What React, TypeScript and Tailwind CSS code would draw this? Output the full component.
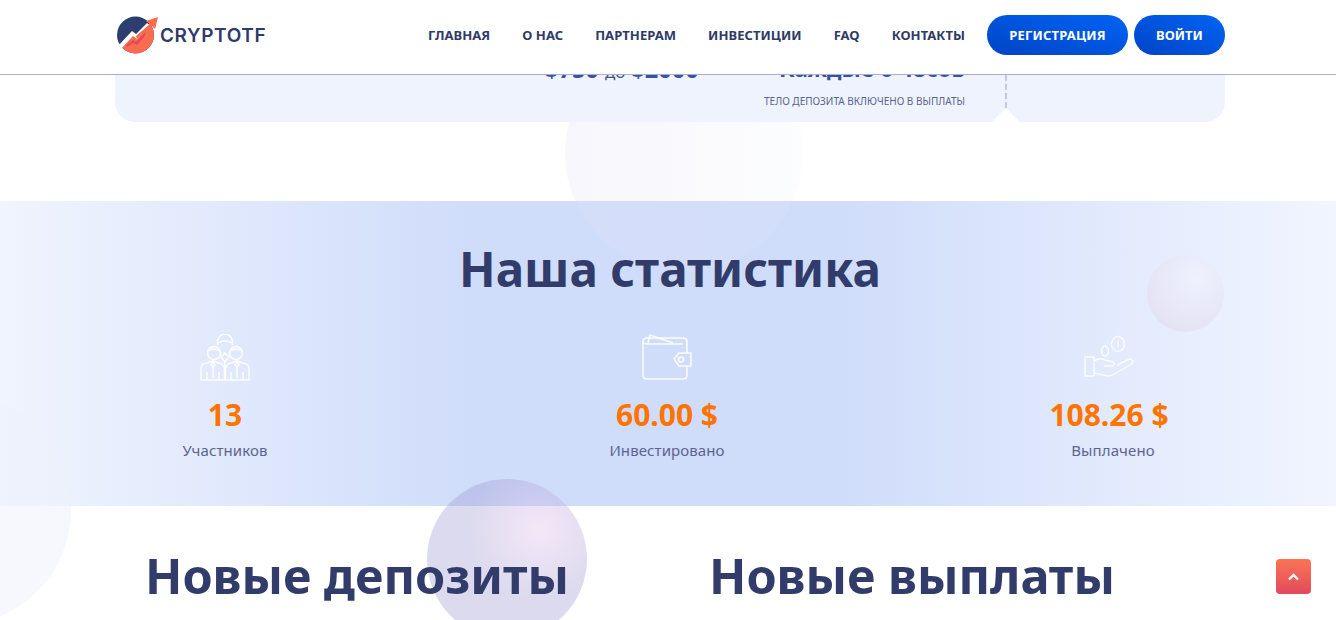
import React from "react";

const navItems = ["Главная", "О нас", "Партнерам", "Инвестиции", "FAQ", "Контакты"];

const Logo = () => (
	<div className="flex items-center gap-[1px]">
		<svg width="42" height="38" viewBox="0 0 42 38" className="block">
			<defs>
				<clipPath id="logoCircle">
					<circle cx="18.500" cy="19" r="18.500" />
				</clipPath>
			</defs>
			<g clipPath="url(#logoCircle)">
				<rect width="42" height="38" fill="#2c3e70" />
				<path d="M0 34 L16 19 L20 21 L34 6 L42 10 V38 H0 Z" fill="#fb6b4f" />
				<path d="M9 29 L16 24 L19 26 L29 15 L27 21 L20 29 L16 27 L10 31 Z" fill="#d9435a" opacity="0.8" />
			</g>
			<path d="M0 31 L15 15 L19 18 L30 7 L34 10 L20 23 L16 20 L3 34 Z" fill="#ffffff" />
			<path d="M29 5 L41 1 L38 13 L35 10 L20 23 L19 20 L33 8 Z" fill="#fb6b4f" />
		</svg>
		<span className="font-['Inter',sans-serif] font-semibold text-[19px] tracking-[0.6px] text-[#2e3b6b] leading-none">
			CRYPTOTF
		</span>
	</div>
);

const PeopleIcon = () => (
	<svg width="50" height="48" viewBox="0 0 50 48" fill="none" stroke="#ffffff" strokeOpacity="0.9" strokeWidth="1.500" strokeLinejoin="round" className="translate-y-[1px]">
		<path d="M18 11 A7.500 8 0 1 1 32 11" />
		<path d="M18 9 Q25 5 32 9" />
		<circle cx="14" cy="19" r="6.500" />
		<circle cx="36" cy="19" r="6.500" />
		<path d="M8 17 Q14 13 20 17 M30 17 Q36 13 42 17" />
		<path d="M1 46 V34 Q1 30 7 29 L13 27 L19 29 Q23 30 24.500 34 V46 Z" />
		<path d="M25.500 46 V34 Q27 30 31 29 L37 27 L43 29 Q49 30 49 34 V46 Z" />
		<path d="M21 23 L25 19 L29 23 L25 28 Z" />
		<path d="M13 28 L11 31 L13 33 L15 31 Z M13 33 V44 M37 28 L35 31 L37 33 L39 31 Z M37 33 V44 M25 28 V35 M7 38 V46 M43 38 V46 M19 38 V46 M31 38 V46" />
	</svg>
);

const WalletIcon = () => (
	<svg width="50" height="46" viewBox="0 0 50 46" fill="none" stroke="#ffffff" strokeOpacity="0.9" strokeWidth="1.600" strokeLinejoin="round">
		<path d="M45 19 V8 Q45 4 41 4 H5 Q1 4 1 8 V41 Q1 45 5 45 H41 Q45 45 45 41 V32" />
		<path d="M1 8 Q1 10 5 10 H41" />
		<path d="M6 9 L8 1 L31 9" />
		<path d="M49 19 H37 L32 25 L37 32 H49 Z" />
		<circle cx="39" cy="25.500" r="2.500" />
	</svg>
);

const HandIcon = () => (
	<svg width="50" height="46" viewBox="0 0 50 46" fill="none" stroke="#ffffff" strokeOpacity="0.9" strokeWidth="1.400" strokeLinejoin="round">
		<path d="M1 23 H10 V42 H1 Z" />
		<path d="M10 27 Q16 23 21 26 L29 28 Q32 30 29 32 H20" />
		<path d="M10 39 L24 42 Q28 42 32 39 L48 30 Q50 26 46 25 L33 31" />
		<ellipse cx="34" cy="10" rx="6.500" ry="7.500" />
		<path d="M34 7 V13" />
		<ellipse cx="21" cy="17" rx="3.500" ry="5" />
	</svg>
);

const StatItem = ({
	icon,
	value,
	label,
	labelClass = "",
}: {
	icon: React.ReactNode;
	value: string;
	label: string;
	labelClass?: string;
}) => (
	<div className="flex flex-col items-center">
		<div className="h-[48px] flex items-center justify-center">{icon}</div>
		<div className="mt-[14px] font-bold text-[30px] leading-[40px] text-[#ff7300]">{value}</div>
		<div className={`mt-[5px] text-[15px] leading-[20px] tracking-[0.1px] text-[#5c6490] ${labelClass}`}>{label}</div>
	</div>
);

const App = () => {
	return (
		<div className="relative w-[1336px] h-[620px] overflow-hidden bg-white font-['Noto_Sans',sans-serif]">
			{/* header stays over the scrolled page */}
			<header className="absolute top-0 left-0 z-30 w-full h-[75px] bg-white border-b border-[#a9afcc] pl-[117px] pr-[111px] pb-[4px] flex items-center justify-between">
				<Logo />
				<div className="flex items-center">
					<nav className="flex items-center gap-[32px] mr-[22px] pt-[2px]">
						{navItems.map((item) => (
							<a key={item} className="uppercase font-bold text-[13px] tracking-[0.05px] text-[#2e3b66] whitespace-nowrap">
								{item}
							</a>
						))}
					</nav>
					<div className="flex gap-[6px]">
						<button className="w-[141px] h-[40px] pt-[2px] rounded-[20px] bg-linear-to-tr from-[#0044c6] to-[#0064f4] text-white uppercase font-bold text-[13px] tracking-[0.2px]">
							Регистрация
						</button>
						<button className="w-[91px] h-[40px] pt-[2px] rounded-[20px] bg-linear-to-tr from-[#0044c6] to-[#0064f4] text-white uppercase font-bold text-[13px]">
							Войти
						</button>
					</div>
				</div>
			</header>

			{/* spheres */}
			<div className="absolute left-[565px] top-[34px] w-[238px] h-[238px] rounded-full bg-[linear-gradient(90deg,rgba(225,225,245,0.28),rgba(235,238,250,0.12))]" />
			<div className="absolute left-[427px] top-[479px] w-[160px] h-[160px] rounded-full bg-[radial-gradient(circle_at_70%_32%,rgba(225,195,235,0.4),rgba(155,149,206,0.35)_45%)]" />
			<div className="absolute left-[-159px] top-[395px] w-[230px] h-[230px] rounded-full bg-[#eef1fb]/50" />
			<div className="absolute left-[1147px] top-[255px] w-[77px] h-[77px] rounded-full bg-[radial-gradient(circle_at_65%_30%,#eff1fe,#e6e6f6_60%,#dfdff0)]" />

			<div className="w-[1110px] ml-[115px] relative z-10">
				<div className="h-[122px] rounded-b-[20px] bg-[#eff3fe] relative overflow-hidden">
					<div className="absolute left-[430px] top-[56px] whitespace-nowrap text-[#3a50a6] font-bold text-[23.500px] leading-[26px]">
						$750 <span className="font-normal text-[17px] text-[#4c5580]">до</span> $2000
					</div>
					<div className="absolute right-[260px] top-[56px] whitespace-nowrap text-[#3a50a6] font-bold text-[22.600px] leading-[26px]">
						Каждые 6-48сов
					</div>
					<div className="absolute right-[260px] top-[95px] whitespace-nowrap text-[10px] leading-[12px] text-[#5c6490]">
						ТЕЛО ДЕПОЗИТА ВКЛЮЧЕНО В ВЫПЛАТЫ
					</div>
					<div className="absolute left-[890px] top-[75px] h-[33px] border-l-2 border-dashed border-[#c2c6ee]" />
					<div className="absolute left-[877px] top-[108px] w-0 h-0 border-x-[14px] border-x-transparent border-b-[14px] border-b-white" />
				</div>
			</div>

			<section className="mt-[79px] h-[305px] bg-[linear-gradient(90deg,#f0f4fe_0%,#cfdcfa_36%,#cfdcfa_62%,#f1f5ff_100%)]">
				<div className="relative z-10 flex flex-col">
					<h2 className="text-center font-bold text-[47.600px] leading-[68px] mt-[34px] ml-[4px] text-[#323c6b]">Наша статистика</h2>
					<div className="w-[1326px] ml-[4px] mt-[30px] grid grid-cols-3">
						<StatItem icon={<PeopleIcon />} value="13" label="Участников" />
						<StatItem icon={<WalletIcon />} value="60.00 $" label="Инвестировано" />
						<StatItem icon={<HandIcon />} value="108.26 $" label="Выплачено" labelClass="pl-[8px]" />
					</div>
				</div>
			</section>

			<section className="relative z-10 flex mt-[35px]">
				<h2 className="ml-[145px] w-[564px] font-bold text-[48.600px] leading-[68px] text-[#323c6b] whitespace-nowrap">Новые депозиты</h2>
				<h2 className="font-bold text-[48.600px] leading-[68px] text-[#323c6b] whitespace-nowrap">Новые выплаты</h2>
			</section>

			<button className="absolute z-20 left-[1276px] top-[559px] w-[35px] h-[35px] rounded-[4px] bg-linear-to-b from-[#fb7355] to-[#e14a5b] flex items-center justify-center">
				<svg width="11" height="8" viewBox="0 0 11 8" fill="none" stroke="#ffffff" strokeWidth="2.400">
					<path d="M1 6.500 L5.500 2 L10 6.500" />
				</svg>
			</button>
		</div>
	);
};

export default App;
